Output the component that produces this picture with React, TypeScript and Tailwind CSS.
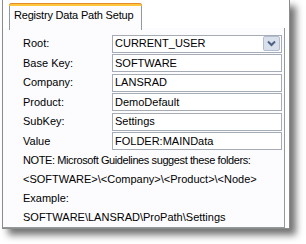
import React from 'react';

const rows: { label: string; value: string; combo?: boolean }[] = [
  { label: 'Root:', value: 'CURRENT_USER', combo: true },
  { label: 'Base Key:', value: 'SOFTWARE' },
  { label: 'Company:', value: 'LANSRAD' },
  { label: 'Product:', value: 'DemoDefault' },
  { label: 'SubKey:', value: 'Settings' },
  { label: 'Value', value: 'FOLDER:MAINData' },
];

const notes: { text: string; tight?: boolean }[] = [
  { text: 'NOTE: Microsoft Guidelines suggest these folders:', tight: true },
  { text: '<SOFTWARE>\\<Company>\\<Product>\\<Node>' },
  { text: 'Example:' },
  { text: 'SOFTWARE\\LANSRAD\\ProPath\\Settings' },
];

const Chevron = () => (
  <svg width="9" height="7" viewBox="0 0 9 7">
    <path d="M1 1.5 L4.5 5 L8 1.5" fill="none" stroke="#4d6185" strokeWidth="2" />
  </svg>
);

const App: React.FC = () => {
  return (
    <div className="w-[306px] h-[244px] bg-white text-[11px] text-black" style={{ fontFamily: '"Liberation Sans", Arial, sans-serif' }}>
      <div className="ml-[2px] w-[288px] h-[229px] flex flex-col bg-white border-l border-r border-b border-[#8c8c8c] shadow-[6px_6px_7px_rgba(0,0,0,0.55)]">
        {/* tab strip */}
        <div className="flex pl-[6px] pt-[3px] h-[29px]">
          <div className="relative w-[133px] h-[27px] bg-[#fcfcfe] border-l border-r border-[#919b9c] rounded-t-[3px] pl-[4px] pt-[6px] leading-[13px] tracking-[-0.2px]">
            <div className="absolute -left-px -right-px top-0 h-[3px] rounded-t-[3px] bg-[#ffc83c] border-t border-[#e68b2c]" />
            Registry Data Path Setup
          </div>
          <div className="flex-1 border-b border-[#919b9c] mr-[4px]" />
        </div>
        {/* page */}
        <div className="flex-1 mr-[4px] mb-[5px] -mt-px bg-[#fcfcfe] border-r border-b border-[#919b9c] pl-[20px] pr-[2px] pt-[6px]">
          {rows.map((r) => (
            <div key={r.label} className="flex items-center h-[19.5px]">
              <div className="w-[89px] leading-[13px]">{r.label}</div>
              <div className="flex-1 h-[18px] flex items-center bg-white border border-[#a5acb5] pl-[2px] pr-[1px]">
                <span className="flex-1 leading-[13px]">{r.value}</span>
                {r.combo && (
                  <div className="w-[17px] h-[15px] flex items-center justify-center rounded-[2px] bg-[#d9dfeb] border border-[#b3bdd1]">
                    <Chevron />
                  </div>
                )}
              </div>
            </div>
          ))}
          {notes.map((n) => (
            <div key={n.text} className={`h-[19px] flex items-center leading-[13px] whitespace-nowrap ${n.tight ? 'tracking-[-0.4px]' : ''}`}>
              {n.text}
            </div>
          ))}
        </div>
      </div>
    </div>
  );
};

export default App;
